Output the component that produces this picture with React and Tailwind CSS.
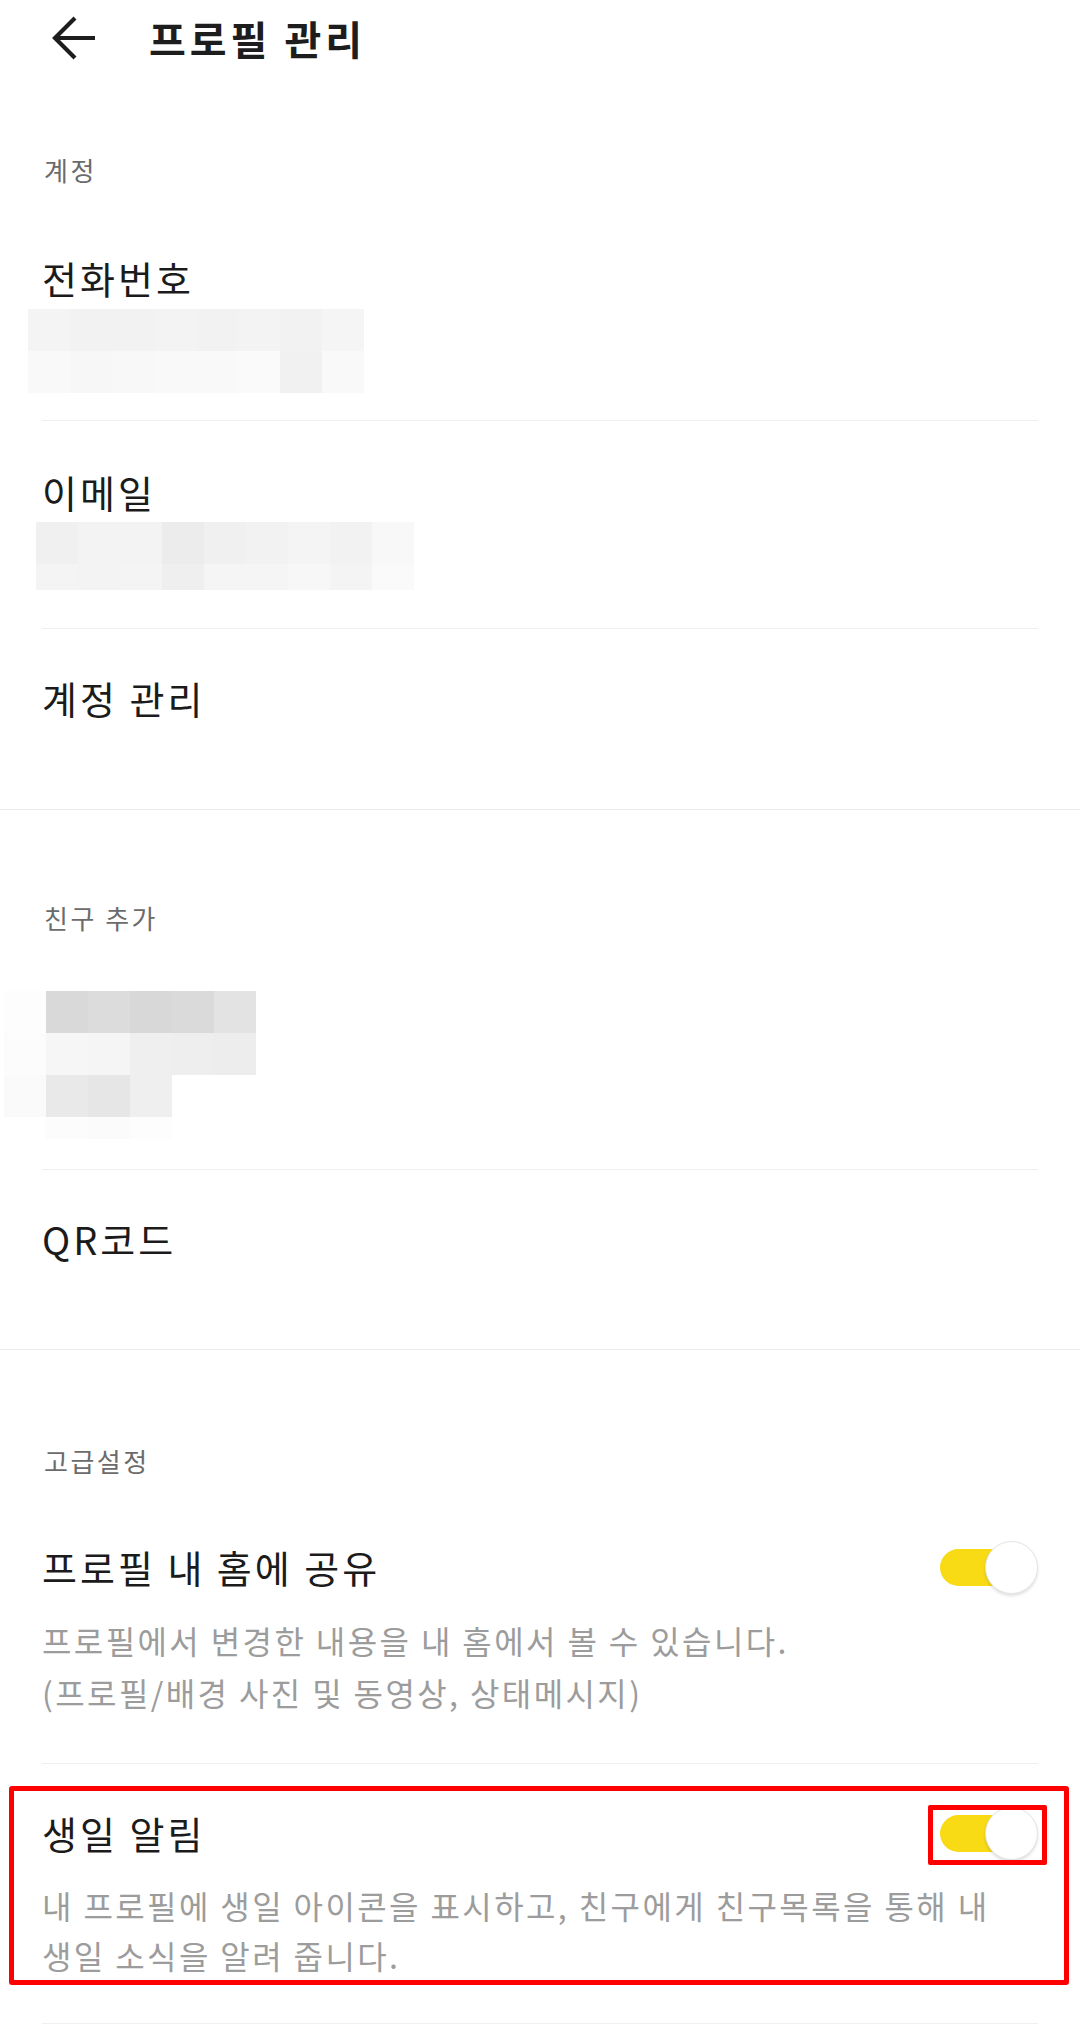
import React from 'react'

const phoneCells = [
  ['bg-[#f4f4f4]', 'bg-[#f2f2f2]', 'bg-[#f2f2f2]', 'bg-[#f3f3f3]', 'bg-[#f2f2f2]', 'bg-[#f3f3f3]', 'bg-[#f2f2f2]', 'bg-[#f5f5f5]'],
  ['bg-[#f9f9f9]', 'bg-[#f7f7f7]', 'bg-[#f8f8f8]', 'bg-[#f9f9f9]', 'bg-[#f9f9f9]', 'bg-[#fafafa]', 'bg-[#f1f1f1]', 'bg-[#f9f9f9]'],
]

const emailCells = [
  ['bg-[#f0f0f0]', 'bg-[#f3f3f3]', 'bg-[#f3f3f3]', 'bg-[#ececec]', 'bg-[#f0f0f0]', 'bg-[#f2f2f2]', 'bg-[#f4f4f4]', 'bg-[#f2f2f2]', 'bg-[#f8f8f8]'],
  ['bg-[#f4f4f4]', 'bg-[#f3f3f3]', 'bg-[#f4f4f4]', 'bg-[#efefef]', 'bg-[#f5f5f5]', 'bg-[#f5f5f5]', 'bg-[#f7f7f7]', 'bg-[#f4f4f4]', 'bg-[#fafafa]'],
]

const friendCells = [
  ['bg-[#fdfdfd]', 'bg-[#d9d9d9]', 'bg-[#dcdcdc]', 'bg-[#d8d8d8]', 'bg-[#dadada]', 'bg-[#e3e3e3]'],
  ['bg-[#fcfcfc]', 'bg-[#f6f6f6]', 'bg-[#f5f5f5]', 'bg-[#efefef]', 'bg-[#eeeeee]', 'bg-[#ededed]'],
  ['bg-[#fafafa]', 'bg-[#e9e9e9]', 'bg-[#e6e6e6]', 'bg-[#efefef]'],
]

function Pixels({ rows, rowClass = 'h-[42px]', lastRowClass }) {
  return (
    <div className="flex flex-col">
      {rows.map((row, i) => (
        <div key={i} className={`flex ${i === rows.length - 1 && lastRowClass ? lastRowClass : rowClass}`}>
          {row.map((c, j) => (
            <div key={j} className={`w-[42px] ${c}`} />
          ))}
        </div>
      ))}
    </div>
  )
}

function Toggle() {
  return (
    <div className="relative h-[53px] w-[98px] shrink-0">
      <div className="absolute left-0 top-[8px] h-[37px] w-[72px] rounded-full bg-[#f8da15]" />
      <div className="absolute right-0 top-0 h-[53px] w-[53px] rounded-full border border-[#e4e4e4] bg-white shadow-[0_2px_3px_rgba(0,0,0,0.12)]" />
    </div>
  )
}

function SectionLabel({ children, pt }) {
  return <div className={`${pt} px-[44px] text-[26px] leading-[36px] tracking-[2.5px] text-[#6b6b6b]`}>{children}</div>
}

function ItemTitle({ children }) {
  return <div className="text-[38px] leading-[48px] tracking-[3px]">{children}</div>
}

export default function App() {
  return (
    <div className="min-h-[2037px] w-[1080px] bg-white font-['Noto_Sans_CJK_KR','Noto_Sans',sans-serif] text-[#1b1b1b]">
      {/* Top bar */}
      <header className="flex h-[76px] items-center">
        <svg className="ml-[52px]" width="44" height="44" viewBox="0 0 44 44" fill="none" stroke="#1d1d1d" strokeWidth="4.2" strokeLinecap="butt">
          <path d="M3 22H43" />
          <path d="M23 2L3 22L23 42" />
        </svg>
        <h1 className="ml-[53px] text-[40px] font-bold leading-[48px] tracking-[4px] text-[#1d1d1d]">프로필 관리</h1>
      </header>

      {/* 계정 */}
      <section className="border-b border-[#ebebeb]">
        <SectionLabel pt="pt-[76px]">계정</SectionLabel>
        <div className="mx-[42px]">
          <div className="border-b border-[#efefef] pb-[27px] pt-[66px]">
            <ItemTitle>전화번호</ItemTitle>
            <div className="-ml-[14px] mt-[7px]">
              <Pixels rows={phoneCells} />
            </div>
          </div>
          <div className="border-b border-[#efefef] pb-[38px] pt-[47px]">
            <ItemTitle>이메일</ItemTitle>
            <div className="-ml-[6px] mt-[6px]">
              <Pixels rows={emailCells} lastRowClass="h-[26px]" />
            </div>
          </div>
          <div className="pb-[87px] pt-[45px]">
            <ItemTitle>계정 관리</ItemTitle>
          </div>
        </div>
      </section>

      {/* 친구 추가 */}
      <section className="border-b border-[#ebebeb]">
        <SectionLabel pt="pt-[90px]">친구 추가</SectionLabel>
        <div className="mx-[42px]">
          <div className="border-b border-[#efefef] pb-[30px] pt-[55px]">
            <div className="-ml-[38px]">
              <Pixels rows={friendCells} />
              <div className="ml-[42px] flex h-[22px]">
                <div className="w-[42px] bg-[#fcfcfc]" />
                <div className="w-[42px] bg-[#fbfbfb]" />
                <div className="w-[42px] bg-[#fdfdfd]" />
              </div>
            </div>
          </div>
          <div className="pb-[86px] pt-[45px]">
            <ItemTitle>QR코드</ItemTitle>
          </div>
        </div>
      </section>

      {/* 고급설정 */}
      <section>
        <SectionLabel pt="pt-[93px]">고급설정</SectionLabel>
        <div className="mx-[42px]">
          <div className="border-b border-[#efefef] pb-[45px] pt-[64px]">
            <div className="flex h-[48px] items-center justify-between">
              <ItemTitle>프로필 내 홈에 공유</ItemTitle>
              <Toggle />
            </div>
            <p className="mt-[23px] break-keep text-[32px] leading-[52px] tracking-[2.4px] text-[#9c9c9c]">
              프로필에서 변경한 내용을 내 홈에서 볼 수 있습니다.
              <br />
              (프로필/배경 사진 및 동영상, 상태메시지)
            </p>
          </div>

          <div className="relative border-b border-[#efefef] pb-[43px] pt-[45px]">
            <div className="flex h-[48px] items-center justify-between">
              <ItemTitle>생일 알림</ItemTitle>
              <Toggle />
            </div>
            <p className="mt-[23px] break-keep text-[32px] leading-[50px] tracking-[2.4px] text-[#9c9c9c]">
              내 프로필에 생일 아이콘을 표시하고, 친구에게 친구목록을 통해 내 생일 소식을 알려 줍니다.
            </p>

            {/* highlight annotations */}
            <div className="pointer-events-none absolute -left-[33px] top-[22px] h-[199px] w-[1060px] rounded-[3px] border-[5px] border-[#ff0000]" />
            <div className="pointer-events-none absolute left-[886px] top-[41px] h-[60px] w-[119px] rounded-[2px] border-[5px] border-[#ff0000]" />
          </div>
        </div>
      </section>
    </div>
  )
}
